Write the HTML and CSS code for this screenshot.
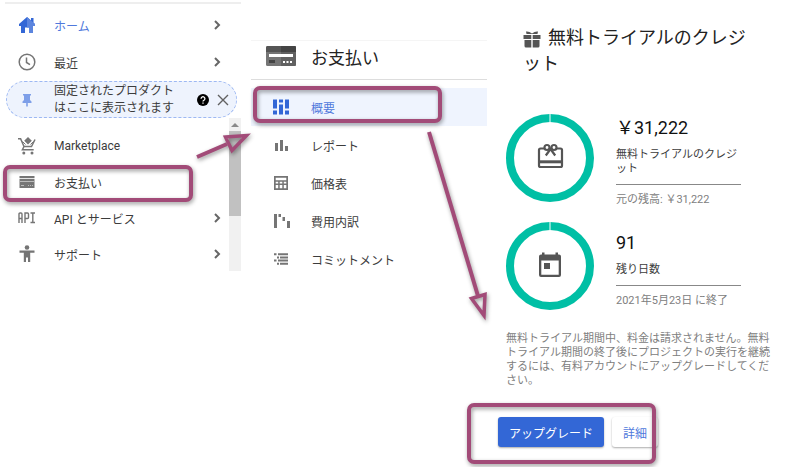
FILE: index.html
```html
<!DOCTYPE html>
<html lang="ja">
<head>
<meta charset="utf-8">
<meta name="viewport" content="width=device-width, initial-scale=1">
<title>お支払い</title>
<link rel="stylesheet" href="styles.css">
</head>
<body>
<main class="guide">
  <nav class="panel side" aria-label="メイン">
    <div class="side-top">
      <a class="item active" href="#">
        <svg class="icon" viewBox="0 0 18 18"><path d="M9 1 1 8v2h2v7h4v-5.500h4V17h4v-7h2V8l-1.500-1.300V2H13v2.500z" fill="#3367d6"/><path d="M9 1v10.500h2V17h4v-7h2V8z" fill="#5c85de"/></svg>
        <span>ホーム</span>
        <svg class="chevron" viewBox="0 0 8 10"><path d="m2 1 4 4-4 4"/></svg>
      </a>
      <a class="item" href="#">
        <svg class="icon" viewBox="0 0 18 18"><g fill="none" stroke="#757575" stroke-width="1.500"><circle cx="9" cy="9" r="7.800"/><path d="M8.500 4.500v5l3.500 2.200"/></g></svg>
        <span>最近</span>
        <svg class="chevron" viewBox="0 0 8 10"><path d="m2 1 4 4-4 4"/></svg>
      </a>
      <div class="pinned">
        <svg class="icon" viewBox="0 0 18 18"><path d="M5 3h8v1.500h-1V9l1.500 1.500V12H9.800v3L9 16l-.8-1v-3H4.500v-1.500L6 9V4.500H5z" fill="#7e9fe8"/></svg>
        <span class="pinned-text">固定されたプロダクトはここに表示されます</span>
        <button class="plain" type="button" aria-label="ヘルプ"><svg width="12" height="12" viewBox="0 0 12 12"><circle cx="6" cy="6" r="6" fill="#000"/><path d="M4.100 4.700a1.900 1.900 0 1 1 2.900 1.600Q6 6.900 6 7.500M6 8.500v1.300" fill="none" stroke="#fff" stroke-width="1.300"/></svg></button>
        <button class="plain" type="button" aria-label="閉じる"><svg width="12" height="12" viewBox="0 0 12 12"><path d="m1 1 10 10M11 1 1 11" stroke="#616161" stroke-width="1.400"/></svg></button>
      </div>
    </div>
    <div class="side-scroll">
      <div class="side-list">
        <a class="item" href="#">
          <svg class="icon" viewBox="0 0 18 18"><g fill="none" stroke="#757575" stroke-width="1.500"><path d="M0 1.800h2.600L6 9.500h7.500L17 2.500M6 9.500l-1.600 3.200h11.300"/></g><path d="m10 0 3.800 3.800L10 7.600 6.200 3.800z" fill="#757575"/><path d="m4.500 4.500 3 3M15.500 4.500l-3 3" stroke="#757575"/><circle cx="5.800" cy="16" r="1.500" fill="#757575"/><circle cx="14" cy="16" r="1.500" fill="#757575"/></svg>
          <span>Marketplace</span>
        </a>
        <a class="item" href="#">
          <svg class="icon" viewBox="0 0 18 18"><path d="M1.500 3h15v2.200h-15z" fill="#757575"/><path d="M1.500 6h15v9h-15z" fill="#757575"/><path d="M1.500 8.500h15M10 12.500h1m1 0h1m1 0h1M3 12.500h3" stroke="#bbb"/></svg>
          <span>お支払い</span>
        </a>
        <a class="item" href="#">
          <svg class="icon" viewBox="0 0 18 18"><path d="M1 14V5q0-1 1-1h1q1 0 1 1v9M1 9.500h3M7 14V4h2.500q1 0 1 1v3.500q0 1-1 1H7M12.500 4H17M12.500 13.500H17M14.800 4v9.500" fill="none" stroke="#757575" stroke-width="1.400"/></svg>
          <span>API とサービス</span>
          <svg class="chevron" viewBox="0 0 8 10"><path d="m2 1 4 4-4 4"/></svg>
        </a>
        <a class="item" href="#">
          <svg class="icon" viewBox="0 0 18 18"><circle cx="9" cy="2.500" r="2.300" fill="#757575"/><path d="M1.500 5.500h15v2.200h-4.300V17h-2.200v-4.500H8V17H5.800V7.700H1.500z" fill="#757575"/></svg>
          <span>サポート</span>
          <svg class="chevron" viewBox="0 0 8 10"><path d="m2 1 4 4-4 4"/></svg>
        </a>
      </div>
      <div class="scrollbar" aria-hidden="true">
        <svg class="scroll-up" viewBox="0 0 12 13"><path d="m2 9 4-4 4 4z" fill="#8a8a8a"/></svg>
        <div class="thumb"></div>
      </div>
    </div>
  </nav>

  <nav class="panel billing" aria-label="お支払い">
    <h2 class="billing-head">
      <svg class="card-icon" viewBox="0 0 30 22"><rect y="1" width="30" height="20" rx="1.500" fill="#757575"/><path d="M15 1h13.500Q30 1 30 2.500v17q0 1.500-1.500 1.500H15z" fill="#616161"/><path d="M0 7V2.500Q0 1 1.500 1h27Q30 1 30 2.500V7z" fill="#555"/><path d="M15 1h13.500Q30 1 30 2.500V7H15z" fill="#444"/><path d="M3 9h24v3H3z" fill="#fff"/><path d="M3 15h6v3H3z" fill="#444"/><path d="M17 16h2v2h-2zm3.500 0h2v2h-2zm3.500 0h2v2h-2z" fill="#fff"/></svg>
      <span>お支払い</span>
    </h2>
    <div class="billing-list">
      <a class="entry active" href="#">
        <svg class="icon" viewBox="0 0 18 18"><path d="M1 1.500h4v9H1zm0 11h4v4H1zm6-11h4v3H7zm0 5h4v10H7zm6-5h4v9h-4zm0 11h4v4h-4z" fill="#3367d6"/></svg>
        <span>概要</span>
      </a>
      <a class="entry" href="#">
        <svg class="icon" viewBox="0 0 18 18"><path d="M3 7h3v8H3zm5-3h3v11H8zm5 6h3v5h-3z" fill="#757575"/></svg>
        <span>レポート</span>
      </a>
      <a class="entry" href="#">
        <svg class="icon" viewBox="0 0 18 18"><path d="M2 2h14v14H2zm1.700 1.700v2.500h10.600V3.700zm0 4v1.800h2.500V7.700zm4 0v1.800h2.600V7.700zm4.100 0v1.800h2.500V7.700zm-8.100 3.300v3.300h2.500V11zm4 0v3.300h2.600V11zm4.100 0v3.300h2.500V11z" fill="#757575" fill-rule="evenodd"/></svg>
        <span>価格表</span>
      </a>
      <a class="entry" href="#">
        <svg class="icon" viewBox="0 0 18 18"><path d="M2 2h3v14H2zm4.500 0h2.500v3H6.500zm4 3H13v4h-2.500zm4.500 4h3v7h-3z" fill="#757575"/></svg>
        <span>費用内訳</span>
      </a>
      <a class="entry" href="#">
        <svg class="icon" viewBox="0 0 18 18"><path d="M2 4.200h2.500M6 4.200h10M5 7.400h2M8 7.400h8M2 10.600h2.500M6 10.600h10M5 13.800h2M8 13.800h8" stroke="#757575" stroke-width="2"/></svg>
        <span>コミットメント</span>
      </a>
    </div>
  </nav>

  <section class="credit">
    <h1 class="credit-title"><svg class="gift" viewBox="0 0 18 18"><path d="M.5 5h7.800v4H.5zm9.200 0h7.800v4H9.700zM1.500 10h6.800v7.500H3q-1.500 0-1.500-1.500zm8.200 0h6.800v6q0 1.500-1.500 1.500H9.700z" fill="#555"/><path d="M3 1.500q3-.5 6 2 3-2.500 6-2l-.5 2.500h-11z" fill="#555"/></svg>無料トライアルのクレジット</h1>
    <div class="stat">
      <div class="ring">
        <svg viewBox="0 0 88 88" class="ring-art"><circle cx="44" cy="44" r="40" fill="none" stroke="#00bfa5" stroke-width="8"/><path d="M44 0v8" stroke="#fff"/><g fill="none" stroke="#555" stroke-width="2.200"><rect x="33" y="34.500" width="23" height="18.500" rx="1.500"/><path d="M33 47.800h23" stroke-width="3"/><circle cx="41" cy="33.500" r="2.500" fill="#fff"/><circle cx="48" cy="33.500" r="2.500" fill="#fff"/><path d="m44.500 35-4.700 6.500M44.500 35l4.700 6.500"/></g></svg>
      </div>
      <div class="stat-body">
        <p class="figure">&#xFFE5;31,222</p>
        <p class="caption">無料トライアルのクレジット</p>
        <p class="note">元の残高: &#xFFE5;31,222</p>
      </div>
    </div>
    <div class="stat">
      <div class="ring">
        <svg viewBox="0 0 88 88" class="ring-art"><circle cx="44" cy="44" r="40" fill="none" stroke="#00bfa5" stroke-width="8"/><path d="M44 0v8" stroke="#fff"/><path d="M36 30.500h2.500v2h11v-2H52v2h1q2 0 2 2V53q0 2-2 2H35q-2 0-2-2V34.500q0-2 2-2h1zM35.300 38.500v14.200h17.400V38.500z" fill="#555" fill-rule="evenodd"/><path d="M38 41h6v6h-6z" fill="#555"/></svg>
      </div>
      <div class="stat-body">
        <p class="figure">91</p>
        <p class="caption">残り日数</p>
        <p class="note">2021年5月23日 に終了</p>
      </div>
    </div>
    <p class="terms">無料トライアル期間中、料金は請求されません。無料トライアル期間の終了後にプロジェクトの実行を継続するには、有料アカウントにアップグレードしてください。</p>
    <div class="actions">
      <button class="btn primary" type="button">アップグレード</button>
      <button class="btn" type="button">詳細</button>
    </div>
  </section>

  <svg class="marks" viewBox="0 0 800 467" aria-hidden="true">
    <g fill="none" stroke="#a24b78" stroke-width="4">
      <rect x="5" y="167" width="186" height="33" rx="5"/>
      <rect x="255" y="88" width="185" height="33" rx="5"/>
      <rect x="469" y="405" width="185" height="57" rx="5"/>
      <path d="m197 157 30-13"/>
      <path d="m429 132 49 164"/>
      <path d="m225.500 137 21-1.500-14.500 15z" stroke-width="3.500"/>
      <path d="m471.500 298.500 13.500-4-1 21z" stroke-width="3.500"/>
    </g>
  </svg>
</main>
</body>
</html>
```
FILE: styles.css
```css
* { box-sizing: border-box; }

body {
  margin: 0;
  background: #fff;
  color: #3c3c3c;
  font-family: Roboto, "Noto Sans CJK JP", sans-serif;
  font-size: 12px;
  font-weight: 400;
}

h1, h2, p { margin: 0; font-weight: 400; }
a { color: inherit; text-decoration: none; }
svg { display: block; flex: none; }

.guide {
  position: relative;
  display: grid;
  grid-template-columns: minmax(0, 236fr) minmax(0, 236fr) minmax(0, 276fr);
  column-gap: 10px;
  align-items: start;
  padding: 2px 27px 20px 5px;
}

.icon { width: 18px; height: 18px; }

/* Main navigation */
.side { border-top: 2px solid #eee; }
.side-top { display: grid; row-gap: 1px; padding-top: 3px; }
.item {
  display: flex;
  align-items: center;
  gap: 18px;
  height: 36px;
  padding: 0 20px 0 13px;
}
.item span { flex: 1; }
.side-list .item { padding-right: 8px; }
.active { color: #5079dc; }
.chevron { width: 8px; height: 10px; fill: none; stroke: #666; stroke-width: 2; }

.pinned {
  display: flex;
  align-items: center;
  height: 37px;
  margin: 0 4px 0 1px;
  padding: 0 7px 0 11px;
  border: 1px dashed #9db8f3;
  border-radius: 19px;
  background: #eef3fd;
  line-height: 17px;
}
.pinned-text { flex: 1; margin: 0 14px 0 18px; }
.plain { border: 0; padding: 0; background: none; }
.plain + .plain { margin-left: 8px; }

.side-scroll { display: flex; }
.side-list { flex: 1; height: 153px; padding-top: 10px; overflow: hidden; }
.scrollbar { width: 12px; background: #f1f1f1; }
.thumb { height: 85px; background: #c1c1c1; }

/* Billing navigation */
.billing { margin-top: 38px; border-top: 1px solid #f5f5f5; }
.billing-head {
  display: flex;
  align-items: center;
  gap: 15px;
  height: 39px;
  padding: 0 15px 8px;
  border-bottom: 1px solid #ddd;
  color: #222;
  font-size: 17px;
}
.card-icon { width: 30px; height: 22px; }
.billing-list { padding-top: 8px; }
.entry {
  display: flex;
  align-items: center;
  gap: 21px;
  height: 38px;
  padding: 0 21px;
}
.entry.active { background: #eff4fe; }

/* Trial credit */
.credit { padding: 23px 0 0 9px; }
.credit-title {
  height: 89px;
  padding: 0 16px 0 17px;
  color: #222;
  font-size: 18px;
  line-height: 26px;
}
.gift {
  display: inline-block;
  width: 18px;
  height: 18px;
  margin-right: 7px;
  vertical-align: -4px;
}
.stat {
  display: flex;
  gap: 22px;
  min-height: 92px;
  margin-bottom: 15px;
}
.ring { flex: none; width: 88px; }
.ring-art { width: 100%; }
.stat-body { align-self: center; width: 125px; }
.figure { color: #111; font-size: 18px; line-height: 28px; }
.caption {
  margin-top: 6px;
  padding-bottom: 8px;
  border-bottom: 1px solid #888;
  font-size: 11px;
  line-height: 14px;
}
.note { margin-top: 8px; color: #808080; font-size: 11px; line-height: 14px; }
.terms { padding-top: 3px; color: #808080; font-size: 11px; line-height: 14px; }
.actions { display: flex; gap: 8px; margin: 29px 0 0 -8px; }
.btn {
  height: 30px;
  padding: 0 11px;
  border: 0;
  border-radius: 3px;
  background: #fff;
  box-shadow: 0 1px 2px #0005;
  color: #5079dc;
  font: inherit;
}
.primary { background: #3367d6; color: #fff; }

/* Highlight boxes and arrows over the panels */
.marks {
  position: absolute;
  top: 0;
  left: 0;
  width: 100%;
  pointer-events: none;
  filter: drop-shadow(1px 2px 2px #0006);
}
```
